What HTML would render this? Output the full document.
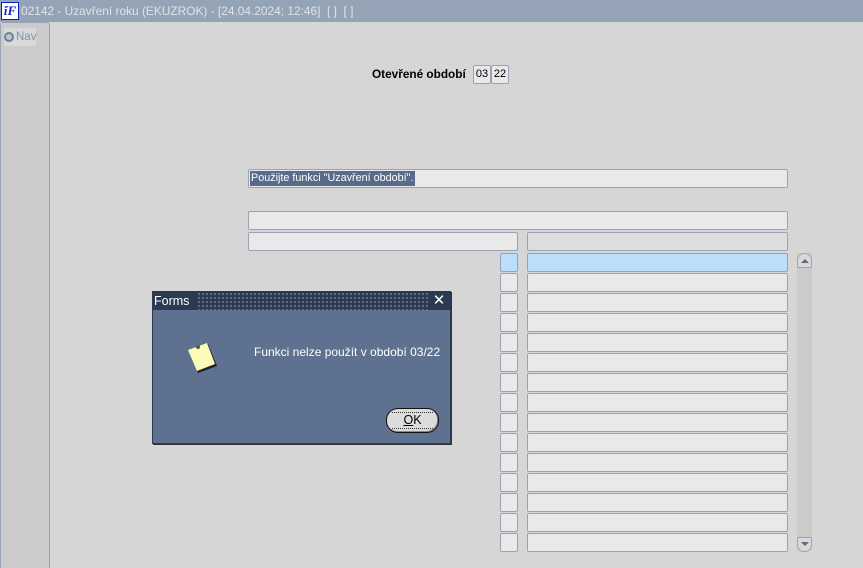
<!DOCTYPE html>
<html><head><meta charset="utf-8"><style>
*{box-sizing:border-box;margin:0;padding:0}
body{width:863px;height:568px;overflow:hidden;background:#d6d6d6;font-family:"Liberation Sans",sans-serif;font-size:12px;position:relative}
.a{position:absolute}
.f{position:absolute;background:#e9e9e9;border:1px solid #98a4b6;border-radius:2px;height:19px}
</style></head><body>
<div class="a" style="left:0;top:0;width:863px;height:22px;background:#95a3b7"></div>
<div class="a" style="left:1px;top:2px;width:18px;height:18px;background:#fff;border:1px solid #1020c0;color:#1020c0;font:italic bold 13px 'Liberation Serif',serif;text-align:center;line-height:16px">ĭF</div>
<div class="a" style="left:21px;top:4px;color:#dfe4ea;font-size:11.9px;white-space:nowrap">02142 - Uzavření roku (EKUZROK) - [24.04.2024; 12:46]&nbsp; [ ]&nbsp; [ ]</div>
<div class="a" style="left:0;top:22px;width:50px;height:546px;background:#cbcbcb;border-left:1px solid #98a4b6;border-right:1px solid #98a4b6;border-top:1px solid #98a4b6;border-radius:3px 3px 0 0"></div>
<div class="a" style="left:4px;top:28px;width:32px;height:18px;background:#d9d9d9"></div>
<div class="a" style="left:4px;top:32px;width:10px;height:10px;border-radius:50%;border:2px solid #6f7e96;background:#bcc6d2"></div>
<div class="a" style="left:16px;top:31px;color:#8090b0;font-size:11.5px">Nav</div>
<div class="a" style="left:372px;top:67px;font-weight:bold;font-size:11.8px">Otevřené období</div>
<div class="f" style="left:473px;top:65px;width:18px;height:19px;font-size:11px;line-height:17px;text-align:center">03</div>
<div class="f" style="left:491px;top:65px;width:18px;height:19px;font-size:11px;line-height:17px;text-align:center">22</div>
<div class="f" style="left:248px;top:169px;width:540px"><span style="background:#586b8a;color:#fff;font-size:10.8px;line-height:15px;display:inline-block;margin:1px 0 0 1px;padding:0 1px">Použijte funkci "Uzavření období".</span></div>
<div class="f" style="left:248px;top:211px;width:540px"></div>
<div class="f" style="left:248px;top:232px;width:270px"></div>
<div class="f" style="left:527px;top:232px;width:261px;background:#dedede"></div>
<div id="rows"></div>
<div class="a" style="left:797px;top:253px;width:15px;height:298px;background:#cbcbcb"></div>
<div class="a" style="left:797px;top:253px;width:15px;height:15px;border:1px solid #98a4b6;border-radius:7px 7px 2px 2px;background:#d9d9d9"><div class="a" style="left:3px;top:5px;border-left:4px solid transparent;border-right:4px solid transparent;border-bottom:4px solid #5a6a86"></div></div>
<div class="a" style="left:797px;top:537px;width:15px;height:15px;border:1px solid #98a4b6;border-radius:2px 2px 7px 7px;background:#d9d9d9"><div class="a" style="left:3px;top:4px;border-left:4px solid transparent;border-right:4px solid transparent;border-top:4px solid #5a6a86"></div></div>
<div class="a" style="left:152px;top:291px;width:299px;height:153px;background:#5e7190;border:1px solid #2a3a50;box-shadow:1px 1px 0 #333"></div>
<div class="a" style="left:153px;top:292px;width:297px;height:18px;background:#2b3a50;background-image:radial-gradient(#6f7d92 0.8px,transparent 1px);background-size:4px 4px;"></div>
<div class="a" style="left:153px;top:292px;width:44px;height:18px;background:#2b3a50;color:#fff;font-size:12.5px;line-height:18px;padding-left:1px">Forms</div>
<div class="a" style="left:428px;top:292px;width:22px;height:18px;background:#2b3a50;color:#fff;font-size:15px;line-height:18px;text-align:center">✕</div>
<svg class="a" style="left:186px;top:340px" width="36" height="36"><polygon points="3,11 22,4 31,26 12,33" fill="#222"/><polygon points="2,10 21,3 29,24 11,31" fill="#fdfbb8"/><circle cx="12" cy="7" r="2" fill="#555"/></svg>
<div class="a" style="left:254px;top:345px;color:#fff;font-size:12px">Funkci nelze použít v období 03/22</div>
<div class="a" style="left:386px;top:408px;width:53px;height:25px;border:1px solid #111;border-radius:12px;background:#dcdcdc;box-shadow:inset -1px -1px 0 #888"></div>
<div class="a" style="left:392px;top:412px;width:41px;height:17px;border-top:1px dotted #333;border-bottom:1px dotted #333;text-align:center;font-size:12.5px;line-height:15px"><u>O</u>K</div>
<script>
var h='';for(var i=0;i<15;i++){var y=253+i*20,c=i==0?'#bbdefb':'#e9e9e9';
h+='<div class="f" style="left:500px;top:'+y+'px;width:18px;background:'+c+'"></div><div class="f" style="left:527px;top:'+y+'px;width:261px;background:'+c+'"></div>';}
document.getElementById('rows').innerHTML=h;
</script>
</body></html>
